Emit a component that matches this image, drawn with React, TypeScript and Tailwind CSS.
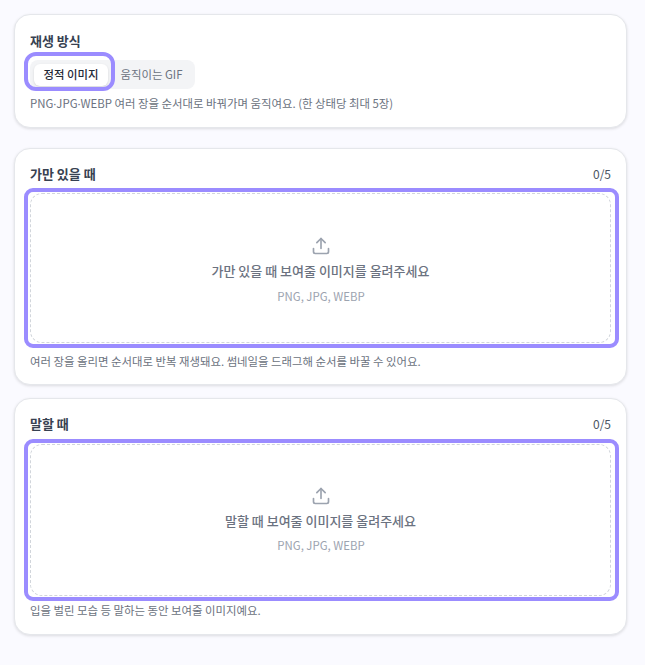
import React from "react";

const FONT = "[font-family:'Noto_Sans_CJK_KR','Noto_Sans',sans-serif]";

function UploadIcon() {
  return (
    <svg width="20" height="20" viewBox="0 0 24 24" fill="none" stroke="#9ca3af" strokeWidth="2" strokeLinecap="round" strokeLinejoin="round">
      <path d="M12 3v12" />
      <path d="m17 8-5-5-5 5" />
      <path d="M21 15v4a2 2 0 0 1-2 2H5a2 2 0 0 1-2-2v-4" />
    </svg>
  );
}

function Dot() {
  return <span className="[font-family:'Noto_Sans',sans-serif]">·</span>;
}

function Section({ title, prompt, hint, tall }: { title: string; prompt: string; hint: string; tall?: boolean }) {
  return (
    <section className="h-[237px] rounded-2xl border border-[#e5e7eb] bg-white px-[15px] pt-[15px] shadow-[0_1px_3px_rgba(0,0,0,0.12)]">
      <div className="flex h-[20px] items-center justify-between">
        <h3 className="text-[13px] font-bold leading-5 text-[#374151]">{title}</h3>
        <span className="text-xs leading-5 text-[#4b5563]">0/5</span>
      </div>
      <div className={tall ? "mt-[5px] -ml-[6px] -mr-[8px] h-[162px] rounded-[9px] border-4 border-[#9b8cff] bg-white pt-px pr-[4px] pb-px pl-[2px]" : "mt-[4px] -ml-[6px] -mr-[8px] h-[160px] rounded-[9px] border-4 border-[#9b8cff] bg-white pt-px pr-[4px] pb-px pl-[2px]"}>
        <div className={tall ? "flex h-[152px] flex-col items-center rounded-xl border border-dashed border-[#d1d5db] pt-[41px]" : "flex h-[150px] flex-col items-center rounded-xl border border-dashed border-[#d1d5db] pt-[42px]"}>
          <UploadIcon />
          <p className="mt-[5px] text-[13px] leading-5 font-medium text-[#6b7280]">{prompt}</p>
          <p className={tall ? "mt-[4px] ml-px text-[11.4px] leading-5 text-[#9ca3af]" : "mt-[5px] ml-px text-[11.4px] leading-5 text-[#9ca3af]"}>PNG, JPG, WEBP</p>
        </div>
      </div>
      <p className={tall ? "mt-px text-[11.4px] leading-4 text-[#6b7280]" : "mt-[5px] text-[11.4px] leading-4 text-[#6b7280]"}>{hint}</p>
    </section>
  );
}

export default function App() {
  return (
    <div className={`flex h-[665px] flex-col bg-[#fafaff] pt-[14px] pr-[18px] pl-[14px] ${FONT}`}>
      <section className="h-[114px] rounded-2xl border border-[#e5e7eb] bg-white px-[15px] pt-[16px] shadow-[0_1px_3px_rgba(0,0,0,0.12)]">
        <h3 className="text-[13px] leading-5 font-bold text-[#374151]">재생 방식</h3>
        <div className="relative mt-[9px] flex h-[29px] w-[165px] items-center rounded-lg bg-[#f3f4f6] pl-[4px]">
          <div className="flex h-[22px] w-[74px] items-center justify-center rounded-md bg-white text-[11.4px] font-medium text-[#1f2937] shadow-sm">
            정적 이미지
          </div>
          <div className="flex h-[22px] flex-1 items-center justify-center text-[11.4px] text-[#6b7280]">움직이는 GIF</div>
          <div className="absolute -top-[8px] -left-[6px] h-[39px] w-[91px] rounded-xl border-4 border-[#9b8cff]" />
        </div>
        <p className="mt-[6px] text-[11.4px] leading-4 text-[#6b7280]">PNG<Dot />JPG<Dot />WEBP 여러 장을 순서대로 바꿔가며 움직여요. (한 상태당 최대 5장)</p>
      </section>
      <div className="mt-[20px]">
        <Section title="가만 있을 때" prompt="가만 있을 때 보여줄 이미지를 올려주세요" hint="여러 장을 올리면 순서대로 반복 재생돼요. 썸네일을 드래그해 순서를 바꿀 수 있어요." />
      </div>
      <div className="mt-[13px]">
        <Section tall title="말할 때" prompt="말할 때 보여줄 이미지를 올려주세요" hint="입을 벌린 모습 등 말하는 동안 보여줄 이미지예요." />
      </div>
    </div>
  );
}
